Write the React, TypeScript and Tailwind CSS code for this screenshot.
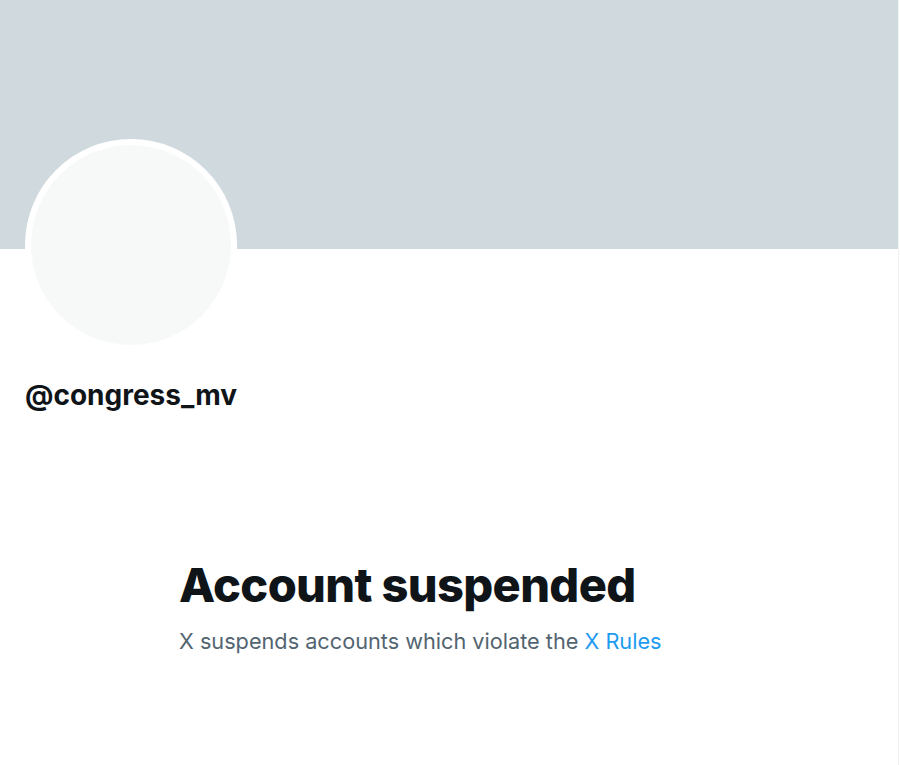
export default function App() {
  return (
    <div className="min-h-[765px] w-[900px] bg-white" style={{ fontFamily: "Inter, 'Noto Sans', sans-serif" }}>
      <div className="flex min-h-[765px] w-[899px] flex-col border-r border-[#eff3f4]">
        {/* banner */}
        <div className="h-[249px] w-full bg-[#cfd9de]" />

        <div className="px-[25px]">
          <div className="-mt-[110px] flex h-[212px] w-[212px] items-center justify-center rounded-full bg-white">
            <div className="h-[200px] w-[200px] rounded-full bg-[#f7f9f9]" />
          </div>
          <h2 className="mt-[28px] text-[28px] font-bold leading-[32px] text-[#0f1419]">@congress_mv</h2>
        </div>

        <div className="mt-[146px] pl-[179px]">
          <h1 className="text-[47px] font-extrabold leading-[56px] tracking-[-0.65px] text-[#0f1419]">Account suspended</h1>
          <p className="mt-[14px] text-[21.7px] leading-[28px] text-[#536471]">
            X suspends accounts which violate the <span className="text-[#1d9bf0]">X Rules</span>
          </p>
        </div>
      </div>
    </div>
  )
}
